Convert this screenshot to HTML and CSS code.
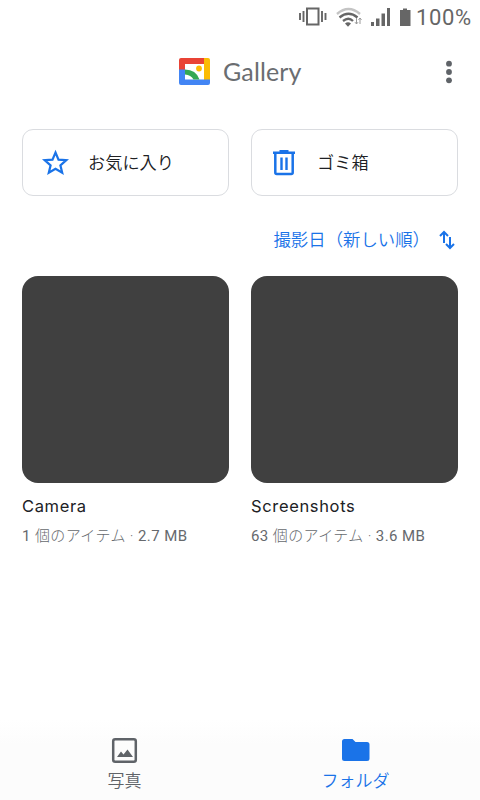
FILE: index.html
```html
<!DOCTYPE html>
<html lang="ja">
<head>
<meta charset="utf-8">
<title>Gallery</title>
<link rel="stylesheet" href="styles.css">
</head>
<body>
<div class="status">
  <svg class="status-icons" viewBox="0 0 116 36">
    <g fill="none" stroke="#666" stroke-width="2">
      <rect x="10" y="8.500" width="11.500" height="16"/>
      <path d="M3 13v7M6.500 11v11M25 11v11M28.500 13v7" stroke-width="1.900"/>
    </g>
    <g transform="translate(2 0)" fill="none">
      <path d="M38 14q11.500-10 23 0" stroke="#c4c4c4" stroke-width="2.400"/>
      <path d="M40.500 17.500q9-7.500 18 0M44 21q5.500-4.500 10 0" stroke="#666" stroke-width="2.300"/>
      <path fill="#666" d="M46 23.500q3-2.500 6 0l-3 3.300z"/>
      <path d="M61 24v-6m-1.500 1.800L61 18l1.500 1.800M57.500 18v6M56 22.200l1.500 1.800 1.500-1.800" stroke="#999" stroke-width="1"/>
    </g>
    <path fill="#666" d="M74 22h3v4h-3zM79 18.500h3.500V26H79zM84.500 13.500H88V26h-3.500zM90 8h3v18h-3zM103 10h3V8.500h4V10h3.500v16H103z"/>
  </svg>
  <span class="battery">100%</span>
</div>
<header class="header">
  <svg class="logo" viewBox="0 0 31 27">
    <path fill="#e94335" d="M2 0h23v6H6v6H0V2q0-2 2-2z"/>
    <path fill="#fbbc04" d="M25 0h4q2 0 2 2v20h-6z"/>
    <path fill="#4285f4" d="M0 11.500h6V21.500h25V25q0 2-2 2H2q-2 0-2-2z"/>
    <path fill="#34a853" d="M6 11.500q11 0 14.500 10h-6Q12 17 6 16.500z"/>
    <circle cx="20" cy="10.500" r="2.900" fill="#fbbc04"/>
  </svg>
  <h1 class="brand">Gallery</h1>
  <svg class="more" viewBox="0 0 8 24" fill="#5f6368"><circle cx="4" cy="3.700" r="2.900"/><circle cx="4" cy="12" r="2.900"/><circle cx="4" cy="20.300" r="2.900"/></svg>
</header>
<main class="content">
  <div class="grid">
    <div class="shortcut">
      <svg class="icon" viewBox="0 0 28 28" fill="none" stroke="#1a73e8" stroke-width="2.200"><path d="M14.500 3.500l3 7.100 7.800.6-5.900 5.100 1.800 7.500-6.700-4-6.700 4 1.800-7.500-5.900-5.100 7.800-.6z"/></svg>
      <span class="label">お気に入り</span>
    </div>
    <div class="shortcut">
      <svg class="icon" viewBox="0 0 28 28" fill="none" stroke="#1a73e8"><path stroke-width="2.500" d="M3 3.800h22M5.300 4.500v19q0 1.500 1.500 1.500h14.400q1.500 0 1.500-1.500v-19"/><path stroke-width="2.400" d="M9.500 2.200h9M11.500 8.500V21M16.500 8.500V21"/></svg>
      <span class="label">ゴミ箱</span>
    </div>
  </div>
  <div class="sort">
    <span class="label">撮影日（新しい順）</span>
    <svg class="swap" viewBox="0 0 16 20" fill="none" stroke="#1a73e8" stroke-width="2"><path d="M5 13V2.500M1 6l4-4 4 4M11 7v10.500M7 14l4 4 4-4"/></svg>
  </div>
  <div class="grid">
    <div class="folder">
      <div class="thumb"></div>
      <div class="name">Camera</div>
      <div class="meta"><span class="num">1</span> 個のアイテム · <span class="num">2.7 MB</span></div>
    </div>
    <div class="folder">
      <div class="thumb"></div>
      <div class="name">Screenshots</div>
      <div class="meta"><span class="num">63</span> 個のアイテム · <span class="num">3.6 MB</span></div>
    </div>
  </div>
</main>
<nav class="nav">
  <div class="tab">
    <svg class="tab-icon" viewBox="0 0 30 28"><rect x="3.200" y="3.200" width="22.600" height="22.600" rx="2" fill="none" stroke="#5f6368" stroke-width="2.500"/><path fill="#5f6368" d="M7 21l4-5.500 2.500 3 4-5L23 21z"/></svg>
    <span>写真</span>
  </div>
  <div class="tab active">
    <svg class="tab-icon" viewBox="0 0 30 28"><path fill="#1a73e8" d="M3.500 3h8l3 3H26q2.500 0 2.500 2.500v14q0 2.500-2.500 2.500H3.500Q1 25 1 22.500v-17Q1 3 3.500 3z"/></svg>
    <span>フォルダ</span>
  </div>
</nav>
</body>
</html>
```
FILE: styles.css
```css
* { box-sizing: border-box; }
body {
  margin: 0;
  height: 800px;
  display: flex;
  flex-direction: column;
  overflow: hidden;
  background: #fff;
  color: #202124;
  font-family: Roboto, "Noto Sans CJK JP", sans-serif;
  font-weight: 350;
}
.status {
  height: 36px;
  display: flex;
  justify-content: flex-end;
  align-items: center;
  padding-right: 8px;
  color: #666;
}
.status-icons { width: 116px; height: 36px; margin-left: -3px; }
.battery { width: 56px; margin-left: 3px; font-size: 22px; font-weight: 400; letter-spacing: .6px; line-height: 34px; white-space: nowrap; }
.header { height: 72px; display: flex; align-items: center; padding: 0 27px 0 179px; }
.logo { width: 31px; height: 27px; margin-top: -1px; }
.brand { flex: 1; margin: -2px 0 0 13px; color: #6a6d71; font: 400 25px/36px Lato, sans-serif; letter-spacing: .15px; }
.more { width: 8px; height: 24px; margin-top: -1px; }
.content { flex: 1; padding: 21px 22px 0; }
.grid { display: grid; grid-template-columns: 207px 207px; gap: 22px; }
.shortcut {
  height: 67px;
  display: flex;
  align-items: center;
  padding-left: 18px;
  border: 1px solid #dadce0;
  border-radius: 11px;
  font-size: 17.200px;
}
.label { padding-bottom: 3px; }
.icon { width: 28px; height: 28px; margin-right: 19px; }
.sort { height: 80px; display: flex; align-items: center; justify-content: flex-end; padding: 8px 3px 0 0; color: #1a73e8; font-size: 17.400px; }
.swap { width: 16px; height: 20px; margin-left: 9px; }
.thumb { height: 207px; border-radius: 16px; background: #404040; }
.name { margin-top: 11px; font: 400 16.500px/24px Inter, sans-serif; letter-spacing: .65px; }
.meta { margin-top: 6px; color: #66696d; font-size: 15px; font-weight: 300; line-height: 24px; letter-spacing: .4px; white-space: nowrap; }
.num { font-weight: 400; }
.nav { height: 80px; display: flex; padding: 0 9px; background: linear-gradient(#fff, #fcfcfc 30%); }
.tab { flex: 1; display: flex; flex-direction: column; align-items: center; padding-top: 16px; color: #5f6368; font-size: 17px; line-height: 28px; }
.tab-icon { width: 30px; height: 28px; margin-bottom: 3px; }
.active { color: #1a73e8; }
```
